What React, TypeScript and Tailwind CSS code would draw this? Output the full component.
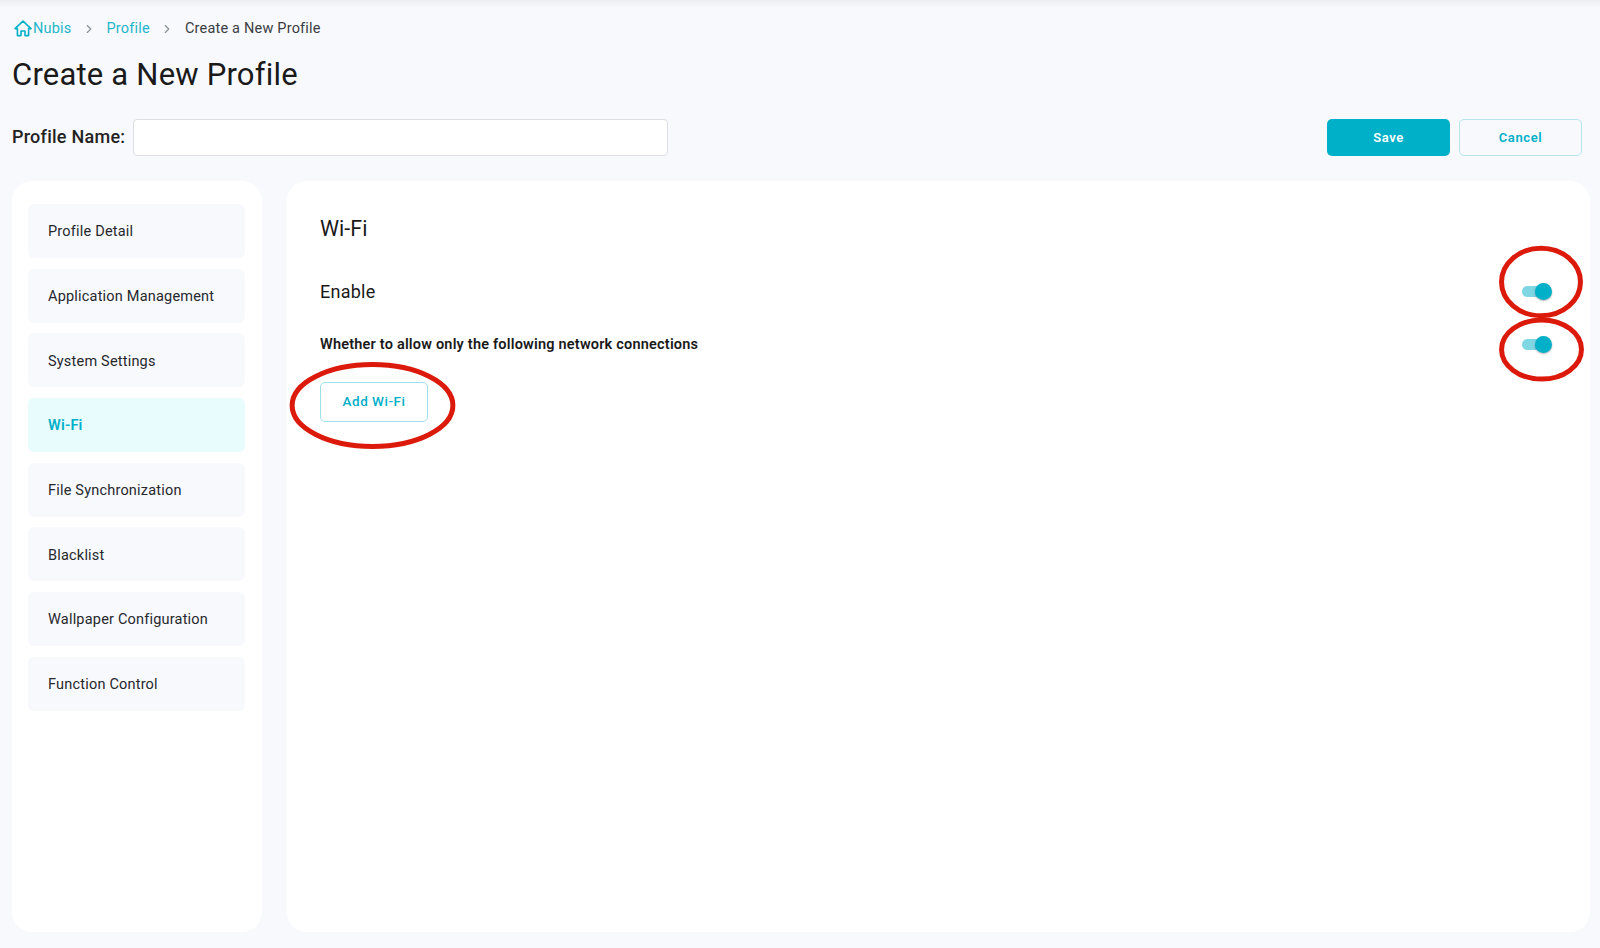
import React from "react";
import { ChevronRight } from "lucide-react";

const menuItems = [
  "Profile Detail",
  "Application Management",
  "System Settings",
  "Wi-Fi",
  "File Synchronization",
  "Blacklist",
  "Wallpaper Configuration",
  "Function Control",
];

function HomeIcon() {
  return (
    <svg className="-mt-[1px]" width="18" height="17" viewBox="0 0 18 17" fill="none" stroke="#00afc8" strokeWidth="1.6" strokeLinejoin="round">
      <path d="M1 8.6 9 1.2l8 7.4h-2.4v7H11v-4.6H7v4.6H3.4v-7z" />
    </svg>
  );
}

function Toggle() {
  return (
    <div className="relative w-[30px] h-[17px] flex items-center">
      <div className="w-[28px] h-[11px] rounded-full bg-[#7fd7e4]" />
      {/* knob */}
      <div className="absolute right-0 top-0 w-[17px] h-[17px] rounded-full bg-[#00afc8] shadow-[0_1px_2px_rgba(0,0,0,0.3)]" />
    </div>
  );
}

function RedCircle({ className }: { className: string }) {
  return (
    <svg className={`absolute overflow-visible pointer-events-none ${className}`} viewBox="0 0 100 100" preserveAspectRatio="none" fill="none">
      <ellipse cx="50" cy="50" rx="47" ry="47" stroke="#db1a0c" strokeWidth="5" vectorEffect="non-scaling-stroke" />
    </svg>
  );
}

export default function App() {
  return (
    <div className="relative w-[1600px] h-[948px] overflow-hidden bg-[#f8f9fd] font-['Roboto',sans-serif] text-[#1a1a1a]">
      <div className="absolute top-0 left-0 right-0 h-[8px] bg-gradient-to-b from-[#eceef1] to-[#f8f9fd]" />

      <div className="relative flex flex-col h-full pl-[12px] pr-[10px] pb-[16px]">
        {/* Breadcrumb */}
        <div className="flex items-center h-[20px] mt-[19px] pl-[2px] text-[14.5px] tracking-[0.2px]">
          <HomeIcon />
          <span className="text-[#1fb5cb] ml-[1px]">Nubis</span>
          <ChevronRight className="w-[14px] h-[14px] text-[#8a9099] mx-[10.5px]" />
          <span className="text-[#1fb5cb]">Profile</span>
          <ChevronRight className="w-[14px] h-[14px] text-[#8a9099] mx-[10.5px]" />
          <span className="text-[#3a3d42]">Create a New Profile</span>
        </div>

        <h1 className="mt-[16px] text-[31px] leading-[40px] tracking-[0.2px] text-[#1a1a1a]">Create a New Profile</h1>

        {/* Profile name row */}
        <div className="flex items-center mt-[24px] h-[37px]">
          <label className="text-[18px] font-medium tracking-[0.25px] text-[#222] w-[121px] -mt-[2px]">Profile Name:</label>
          <input className="w-[535px] h-[37px] bg-white border border-[#dcdfe3] rounded-[4px]" />
          <button className="ml-auto w-[123px] h-[37px] rounded-[5px] bg-[#00afc8] text-white text-[13px] font-semibold tracking-[0.6px]">Save</button>
          <button className="ml-[9px] mr-[8px] w-[123px] h-[37px] rounded-[5px] border border-[#b5e6ee] text-[#00afc8] text-[13px] font-semibold tracking-[0.6px]">Cancel</button>
        </div>

        <div className="flex flex-1 gap-[25px] mt-[25px] min-h-0">
          {/* Sidebar */}
          <aside className="w-[250px] bg-white rounded-[20px] pl-[16px] pr-[17px] pt-[23px]">
            <div className="flex flex-col gap-[10.7px]">
              {menuItems.map((item) => (
                <div
                  key={item}
                  className={
                    item === "Wi-Fi"
                      ? "h-[54px] flex items-center pl-[20px] pt-[2px] rounded-[6px] bg-[#e8fcfe] text-[#00afc8] text-[14.5px] font-semibold tracking-[0.2px]"
                      : "h-[54px] flex items-center pl-[20px] pt-[2px] rounded-[6px] bg-[#f8f9fd] text-[#26282c] text-[14.5px] tracking-[0.2px]"
                  }
                >
                  {item}
                </div>
              ))}
            </div>
          </aside>

          {/* Main panel */}
          <main className="flex-1 bg-white rounded-[20px] pl-[33px] pr-[38px] pt-[34px]">
            <h2 className="text-[21.5px] leading-[28px] text-[#1a1a1a]">Wi-Fi</h2>
            <div className="flex items-center justify-between mt-[36px] h-[24px]">
              <span className="text-[18px] tracking-[0.25px] text-[#1a1a1a]">Enable</span>
              <Toggle />
            </div>
            <div className="flex items-center justify-between mt-[29px] h-[24px]">
              <span className="text-[14.5px] font-semibold tracking-[0.2px] text-[#1a1a1a] mt-[1px]">Whether to allow only the following network connections</span>
              <Toggle />
            </div>
            <button className="mt-[26px] w-[108px] h-[40px] pb-[2px] rounded-[5px] border border-[#9ce0ea] text-[#00afc8] text-[13.5px] font-medium tracking-[0.5px]">Add Wi-Fi</button>
          </main>
        </div>
      </div>

      {/* Annotation marks */}
      <RedCircle className="left-[1499px] top-[246px] w-[84px] h-[72px]" />
      <RedCircle className="left-[1499px] top-[318px] w-[85px] h-[63px]" />
      <RedCircle className="left-[287px] top-[362px] w-[171px] h-[87px]" />
    </div>
  );
}
